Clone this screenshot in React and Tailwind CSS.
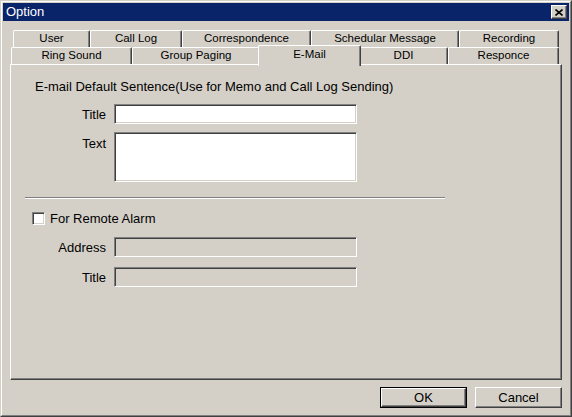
const TOP_TABS = [
  ['User', 77],
  ['Call Log', 92],
  ['Correspondence', 129],
  ['Schedular Message', 148],
  ['Recording', 100],
];

const BOTTOM_TABS = [
  ['Ring Sound', 121],
  ['Group Paging', 128],
  ['E-Mail', 99, true],
  ['DDI', 89],
  ['Responce', 111],
];

const sunken =
  'border border-t-[#808080] border-l-[#808080] border-r-white border-b-white shadow-[inset_1px_1px_#404040,inset_-1px_-1px_#d4d0c8]';

function Tab({ label, width, selected }) {
  if (selected) {
    return (
      <div
        style={{ width: width + 4 }}
        className="relative z-10 -mx-[2px] -mt-[2px] h-[21px] flex items-start justify-center pt-[1px] bg-[#d4d0c8] border-t border-l border-white border-r border-r-[#404040] shadow-[inset_-1px_0_#808080] rounded-tl-[2px] rounded-tr-[2px]"
      >
        <span className="leading-[15px]">{label}</span>
      </div>
    );
  }
  return (
    <div
      style={{ width }}
      className="h-[17px] flex items-center justify-center bg-[#d4d0c8] border-t border-l border-white border-r border-r-[#404040] shadow-[inset_-1px_0_#808080] rounded-tl-[2px] rounded-tr-[2px]"
    >
      {label}
    </div>
  );
}

function Field({ label, disabled, tall }) {
  return (
    <div className={`flex ${tall ? 'items-start' : 'items-center'} gap-[8px]`}>
      <div className={`w-[95px] text-right leading-[15px] ${tall ? 'pt-[4px]' : ''}`}>{label}</div>
      <div
        className={`w-[243px] ${tall ? 'h-[50px]' : 'h-[20px]'} ${disabled ? 'bg-[#d4d0c8]' : 'bg-white'} ${sunken}`}
      />
    </div>
  );
}

export default function App() {
  return (
    <div
      className="w-[572px] h-[417px] bg-[#d4d0c8] text-black border border-t-[#d4d0c8] border-l-[#d4d0c8] border-r-[#404040] border-b-[#404040]"
      style={{ fontFamily: '"Liberation Sans", Arial, sans-serif' }}
    >
      <div className="h-full flex flex-col p-px border border-t-white border-l-white border-r-[#808080] border-b-[#808080]">
        {/* Title bar */}
        <div className="h-[18px] bg-[#0a246a] flex items-center justify-between pl-[3px] pr-[2px]">
          <span className="text-white text-[13px] leading-[16px]">Option</span>
          <div className="w-[16px] h-[14px] bg-[#d4d0c8] border border-t-white border-l-white border-r-[#404040] border-b-[#404040] shadow-[inset_-1px_-1px_#808080] flex items-center justify-center">
            <svg width="8" height="7" viewBox="0 0 8 7">
              <path d="M0.5 0.5 L7.5 6.5 M7.5 0.5 L0.5 6.5" stroke="black" strokeWidth="1.6" />
            </svg>
          </div>
        </div>

        {/* Tabs */}
        <div className="mt-[9px] ml-[10px] flex text-[11.5px]">
          {TOP_TABS.map(([l, w]) => (
            <Tab key={l} label={l} width={w} />
          ))}
        </div>
        <div className="ml-[8px] h-[17px] flex items-start text-[11.5px]">
          {BOTTOM_TABS.map(([l, w, s]) => (
            <Tab key={l} label={l} width={w} selected={s} />
          ))}
        </div>

        {/* Panel */}
        <div className="ml-[7px] w-[552px] h-[316px] flex flex-col text-[13px] border border-t-white border-l-white border-r-[#404040] border-b-[#404040] shadow-[inset_-1px_-1px_#808080]">
          <div className="mt-[14px] ml-[24px] leading-[15px]">
            E-mail Default Sentence(Use for Memo and Call Log Sending)
          </div>
          <div className="mt-[10px]">
            <Field label="Title" />
          </div>
          <div className="mt-[8px]">
            <Field label="Text" tall />
          </div>
          <div className="mt-[15px] ml-[14px] w-[420px]">
            <div className="h-px bg-[#808080]" />
            <div className="h-px bg-white" />
          </div>
          <div className="mt-[12px] ml-[21px] flex items-center gap-[5px]">
            <div className={`w-[13px] h-[13px] bg-white ${sunken}`} />
            <span className="leading-[15px]">For Remote Alarm</span>
          </div>
          <div className="mt-[11px]">
            <Field label="Address" disabled />
          </div>
          <div className="mt-[10px]">
            <Field label="Title" disabled />
          </div>
        </div>

        {/* Buttons */}
        <div className="mt-[7px] w-[559px] flex justify-end gap-[8px] text-[13px]">
          <div className="w-[87px] h-[21px] border border-black">
            <div className="h-full flex items-center justify-center border border-t-white border-l-white border-r-[#404040] border-b-[#404040] shadow-[inset_-1px_-1px_#808080]">
              OK
            </div>
          </div>
          <div className="w-[87px] h-[21px] flex items-center justify-center border border-t-white border-l-white border-r-[#404040] border-b-[#404040] shadow-[inset_-1px_-1px_#808080]">
            Cancel
          </div>
        </div>
      </div>
    </div>
  );
}
